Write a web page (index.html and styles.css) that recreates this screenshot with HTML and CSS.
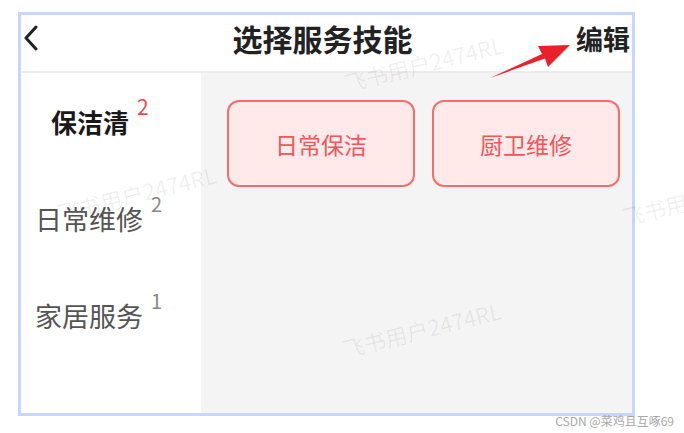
FILE: index.html
```html
<!DOCTYPE html>
<html lang="zh-CN">
<head>
<meta charset="utf-8">
<title>选择服务技能</title>
<link rel="stylesheet" href="styles.css">
</head>
<body>
<div class="frame">
  <header class="header">
    <span class="back">
      <svg width="16" height="26" viewBox="0 0 16 26"><polyline points="13,2 3,13 13,24" fill="none" stroke="#222" stroke-width="3" stroke-linecap="round" stroke-linejoin="round"/></svg>
    </span>
    <h1 class="title">选择服务技能</h1>
    <span class="edit">编辑</span>
  </header>
  <div class="body">
    <nav class="sidebar">
      <div class="item active"><span class="label">保洁清</span><sup class="count">2</sup></div>
      <div class="item"><span class="label">日常维修</span><sup class="count">2</sup></div>
      <div class="item"><span class="label">家居服务</span><sup class="count">1</sup></div>
    </nav>
    <main class="content">
      <div class="card">日常保洁</div>
      <div class="card">厨卫维修</div>
    </main>
  </div>
</div>

<div class="overlay">
  <svg class="arrow" width="684" height="433" viewBox="0 0 684 433">
    <polygon points="490,78 542,54 538,46 570,45 548,67 545,58.5" fill="#e8212b"/>
  </svg>
  <span class="wm wm1">飞书用户2474RL</span>
  <span class="wm wm2">飞书用户2474RL</span>
  <span class="wm wm3">飞书用户2474RL</span>
  <span class="wm wm4">飞书用户2474RL</span>
  <span class="csdn">CSDN @菜鸡且互啄69</span>
</div>
</body>
</html>
```
FILE: styles.css
```css
html, body {
  margin: 0;
  padding: 0;
  width: 684px;
  height: 433px;
  overflow: hidden;
  background: #fff;
  font-family: "Noto Sans CJK SC", "Noto Sans", sans-serif;
}

body {
  position: relative;
  padding-top: 12px;
  padding-left: 18px;
  box-sizing: border-box;
}

.frame {
  width: 617px;
  height: 404px;
  box-sizing: border-box;
  border: 3px solid #c6d6fc;
  display: flex;
  flex-direction: column;
  background: #fff;
}

.header {
  height: 58px;
  box-sizing: border-box;
  padding: 0 2px 10px 2px;
  display: grid;
  grid-template-columns: 1fr auto 1fr;
  align-items: center;
  border-bottom: 2px solid #ececec;
  flex-shrink: 0;
}

.back {
  display: flex;
  align-items: center;
  justify-self: start;
}

.title {
  margin: 0 8px 0 0;
  font-size: 30px;
  font-weight: 700;
  color: #222;
  line-height: 1;
}

.edit {
  justify-self: end;
  font-size: 27px;
  font-weight: 700;
  color: #222;
  line-height: 1;
}

.body {
  flex: 1;
  display: flex;
  min-height: 0;
}

.sidebar {
  width: 180px;
  flex-shrink: 0;
  background: #fff;
  display: flex;
  flex-direction: column;
}

.item {
  height: 97px;
  display: flex;
  align-items: center;
  padding-left: 14px;
  font-size: 27px;
  color: #555;
  line-height: 1;
}

.item.active {
  padding-left: 30px;
  font-size: 26px;
  font-weight: 700;
  color: #1a1a1a;
}

.count {
  font-size: 20px;
  font-weight: 400;
  color: #888;
  margin-left: 8px;
  align-self: center;
  margin-bottom: 30px;
  line-height: 1;
}

.item.active .count {
  font-size: 21px;
  color: #f5484f;
}

.content {
  flex: 1;
  background: #f4f4f4;
  padding: 27px 11px 0 26px;
  display: flex;
  align-items: flex-start;
  gap: 17px;
}

.card {
  width: 188px;
  height: 87px;
  box-sizing: border-box;
  border: 2px solid #f46e6e;
  border-radius: 12px;
  background: #ffe9e9;
  color: #f2555b;
  font-size: 23px;
  display: flex;
  align-items: center;
  justify-content: center;
}

.overlay {
  position: absolute;
  inset: 0;
  pointer-events: none;
}

.arrow {
  position: absolute;
  left: 0;
  top: 0;
}

.wm {
  position: absolute;
  font-size: 22px;
  color: rgba(0, 0, 0, 0.065);
  white-space: nowrap;
  transform: rotate(-14deg);
  transform-origin: center;
  width: 162px;
  text-align: center;
  line-height: 30px;
}

.wm1 { left: 342px; top: 48px; }
.wm2 { left: 55px; top: 178px; }
.wm3 { left: 620px; top: 182px; }
.wm4 { left: 340px; top: 314px; }

.csdn {
  position: absolute;
  right: 10px;
  top: 412px;
  font-size: 12px;
  color: #a8a8a8;
  white-space: nowrap;
}
```
